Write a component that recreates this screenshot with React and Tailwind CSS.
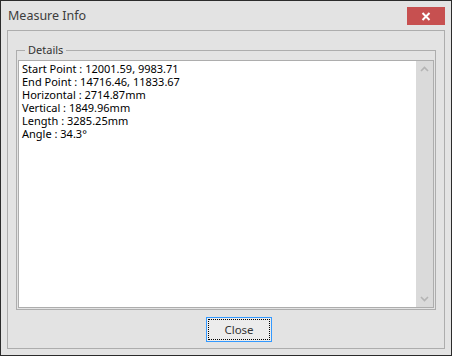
import React from "react";

const lines = [
  "Start Point : 12001.59, 9983.71",
  "End Point : 14716.46, 11833.67",
  "Horizontal : 2714.87mm",
  "Vertical : 1849.96mm",
  "Length : 3285.25mm",
  "Angle : 34.3°",
];

const font = { fontFamily: '"Noto Sans", "Open Sans", Arial, sans-serif' };

const MeasureInfo = () => {
  return (
    <div
      className="w-[452px] h-[356px] border border-[#2b2b2b] bg-[#e3e3e3] flex flex-col text-[#333]"
      style={font}
    >
      {/* Title bar */}
      <div className="h-[29px] flex items-start justify-between">
        <div className="pl-[7px] pt-[6px] text-[12.5px] leading-[18px] text-[#3c3c3c]">
          Measure Info
        </div>
        <button className="mt-[6px] mr-[6px] w-[38px] h-[18px] bg-[#c75050] flex items-center justify-center">
          <svg width="10" height="9" viewBox="0 0 10 9">
            <path d="M1.5 1 L8.5 8 M8.5 1 L1.5 8" stroke="#fff" strokeWidth="2" />
          </svg>
        </button>
      </div>

      {/* Panel */}
      <div className="ml-[6px] w-[438px] h-[319px] border border-[#adadad] pl-[8px] pt-[19px] flex flex-col">
        {/* Group box */}
        <div className="relative w-[420px] h-[260px] border border-[#adadad] pt-[9px] px-[1px] pb-[1px]">
          <span className="absolute left-[8px] top-[-9px] px-[3px] bg-[#e3e3e3] text-[11px] leading-[16px] text-[#333]">
            Details
          </span>
          <div className="w-[416px] h-[248px] border border-[#adadad] bg-white flex">
            <div className="flex-1 pl-[3px] pt-[1px] text-[11px] leading-[13px] text-black">
              {lines.map((l) => (
                <div key={l}>{l}</div>
              ))}
            </div>
            <div className="w-[17px] bg-[#dadada] flex flex-col items-center justify-between py-[5px]">
              <svg width="9" height="6" viewBox="0 0 9 6">
                <path d="M1 5 L4.5 1.5 L8 5" stroke="#b4b4b4" strokeWidth="1.6" fill="none" />
              </svg>
              <svg width="9" height="6" viewBox="0 0 9 6">
                <path d="M1 1 L4.5 4.5 L8 1" stroke="#b4b4b4" strokeWidth="1.6" fill="none" />
              </svg>
            </div>
          </div>
        </div>

        {/* Close button */}
        <button className="mt-[7px] ml-[190px] w-[66px] h-[25px] border border-[#3399ff] bg-[#ececec] p-[1px] flex">
          <span className="flex-1 border border-dotted border-black flex items-center justify-center text-[11.5px] text-[#333]">
            Close
          </span>
        </button>
      </div>
    </div>
  );
};

export default function App() {
  return <MeasureInfo />;
}
